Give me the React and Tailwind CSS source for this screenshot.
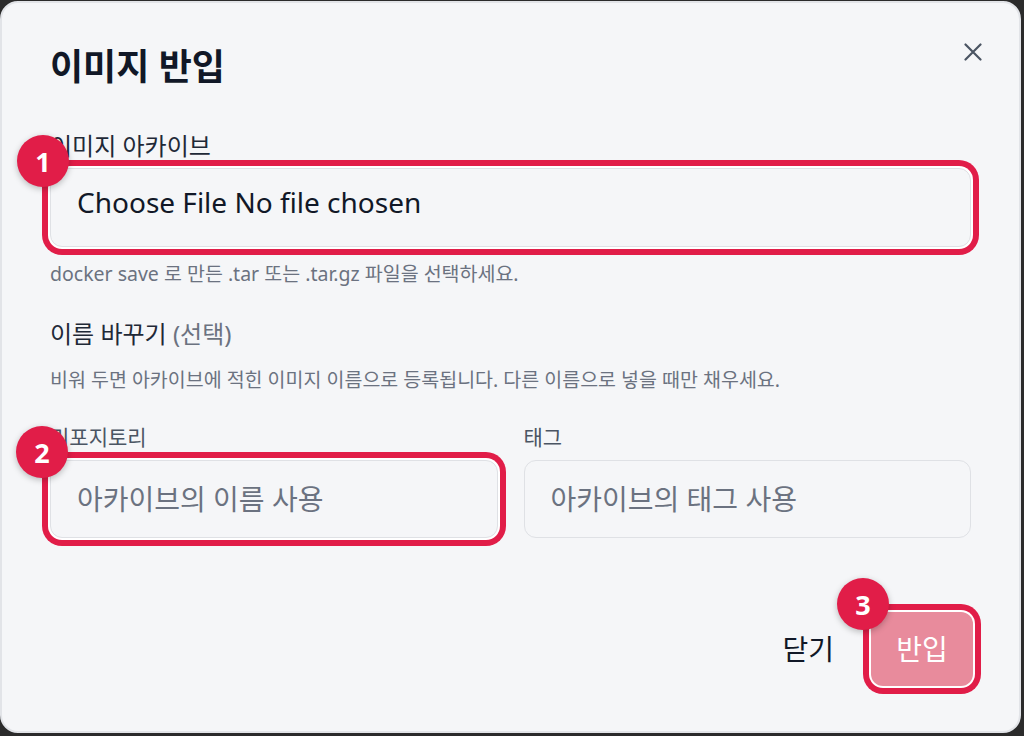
const ring = "shadow-[0_0_0_2px_#ffffff,0_0_0_8px_#e11d48]";

const Badge = ({ n }) => (
  <span className="absolute -left-[34px] -top-[34px] flex h-[52px] w-[52px] items-center justify-center rounded-full bg-[#e11d48] text-[27px] font-bold leading-none text-white shadow-[0_2px_6px_rgba(0,0,0,0.25)]">
    {n}
  </span>
);

const ImportImageDialog = () => {
  return (
    <div className="h-[736px] w-[1024px] overflow-hidden bg-[#2b2b2b] pt-[1px] font-['Noto_Sans','Noto_Sans_CJK_KR',sans-serif]">
      <div className="h-[732px] w-[1021px] rounded-[18px] border-2 border-[#e2e4e8] bg-[#f5f6f8] px-[48px] pt-[44px]">
        {/* header */}
        <div className="flex items-start justify-between">
          <h2 className="text-[36px] font-bold leading-[40px] text-[#111827]">이미지 반입</h2>
          <button className="-mr-[11px] mt-[-4px] text-[#4b5563]">
            <svg width="18" height="18" viewBox="0 0 18 18" fill="none" stroke="currentColor" strokeWidth="2.2" strokeLinecap="round">
              <path d="M1.5 1.5 16.5 16.5M16.5 1.5 1.5 16.5" />
            </svg>
          </button>
        </div>

        {/* archive */}
        <div className="mt-[44px] text-[24px] leading-[30px] text-[#1f2937]">이미지 아카이브</div>
        <div className={`relative mt-[7px] flex h-[79px] items-center rounded-[12px] border border-[#dfe1e5] bg-[#f5f6f8] px-[26px] pb-[12px] text-[28px] text-[#111827] ${ring}`}>
          <Badge n="1" />
          Choose File No file chosen
        </div>
        <p className="mt-[14px] text-[19.5px] leading-[26px] text-[#6b7280]">
          docker save 로 만든 .tar 또는 .tar.gz 파일을 선택하세요.
        </p>

        {/* rename */}
        <div className="mt-[32px] text-[24px] leading-[30px] text-[#1f2937]">
          이름 바꾸기 <span className="text-[#6b7280]">(선택)</span>
        </div>
        <p className="mt-[18px] text-[19.5px] leading-[26px] text-[#6b7280]">
          비워 두면 아카이브에 적힌 이미지 이름으로 등록됩니다. 다른 이름으로 넣을 때만 채우세요.
        </p>

        <div className="mt-[30px] grid grid-cols-2 gap-[26px]">
          <div>
            <div className="text-[21px] leading-[28px] text-[#4b5563]">리포지토리</div>
            <div className="relative mt-[9px]">
              <Badge n="2" />
              <input
                placeholder="아카이브의 이름 사용"
                className={`h-[78px] w-full rounded-[12px] border border-[#dfe1e5] bg-[#f5f6f8] px-[26px] text-[28px] text-[#111827] outline-none placeholder:text-[#6b7280] ${ring}`}
              />
            </div>
          </div>
          <div>
            <div className="text-[21px] leading-[28px] text-[#4b5563]">태그</div>
            <input
              placeholder="아카이브의 태그 사용"
              className="mt-[9px] h-[78px] w-full rounded-[12px] border border-[#dfe1e5] bg-[#f5f6f8] px-[26px] text-[28px] text-[#111827] outline-none placeholder:text-[#6b7280]"
            />
          </div>
        </div>

        {/* footer */}
        <div className="mt-[74px] flex items-center justify-end gap-[13px]">
          <button className="h-[74px] px-[24px] text-[28px] text-[#111827]">닫기</button>
          <div className="relative">
            <Badge n="3" />
            <button className={`-mr-[2px] h-[74px] w-[102px] rounded-[12px] bg-[#e88b9c] text-[28px] text-white ${ring}`}>
              반입
            </button>
          </div>
        </div>
      </div>
    </div>
  );
};

export default ImportImageDialog;
